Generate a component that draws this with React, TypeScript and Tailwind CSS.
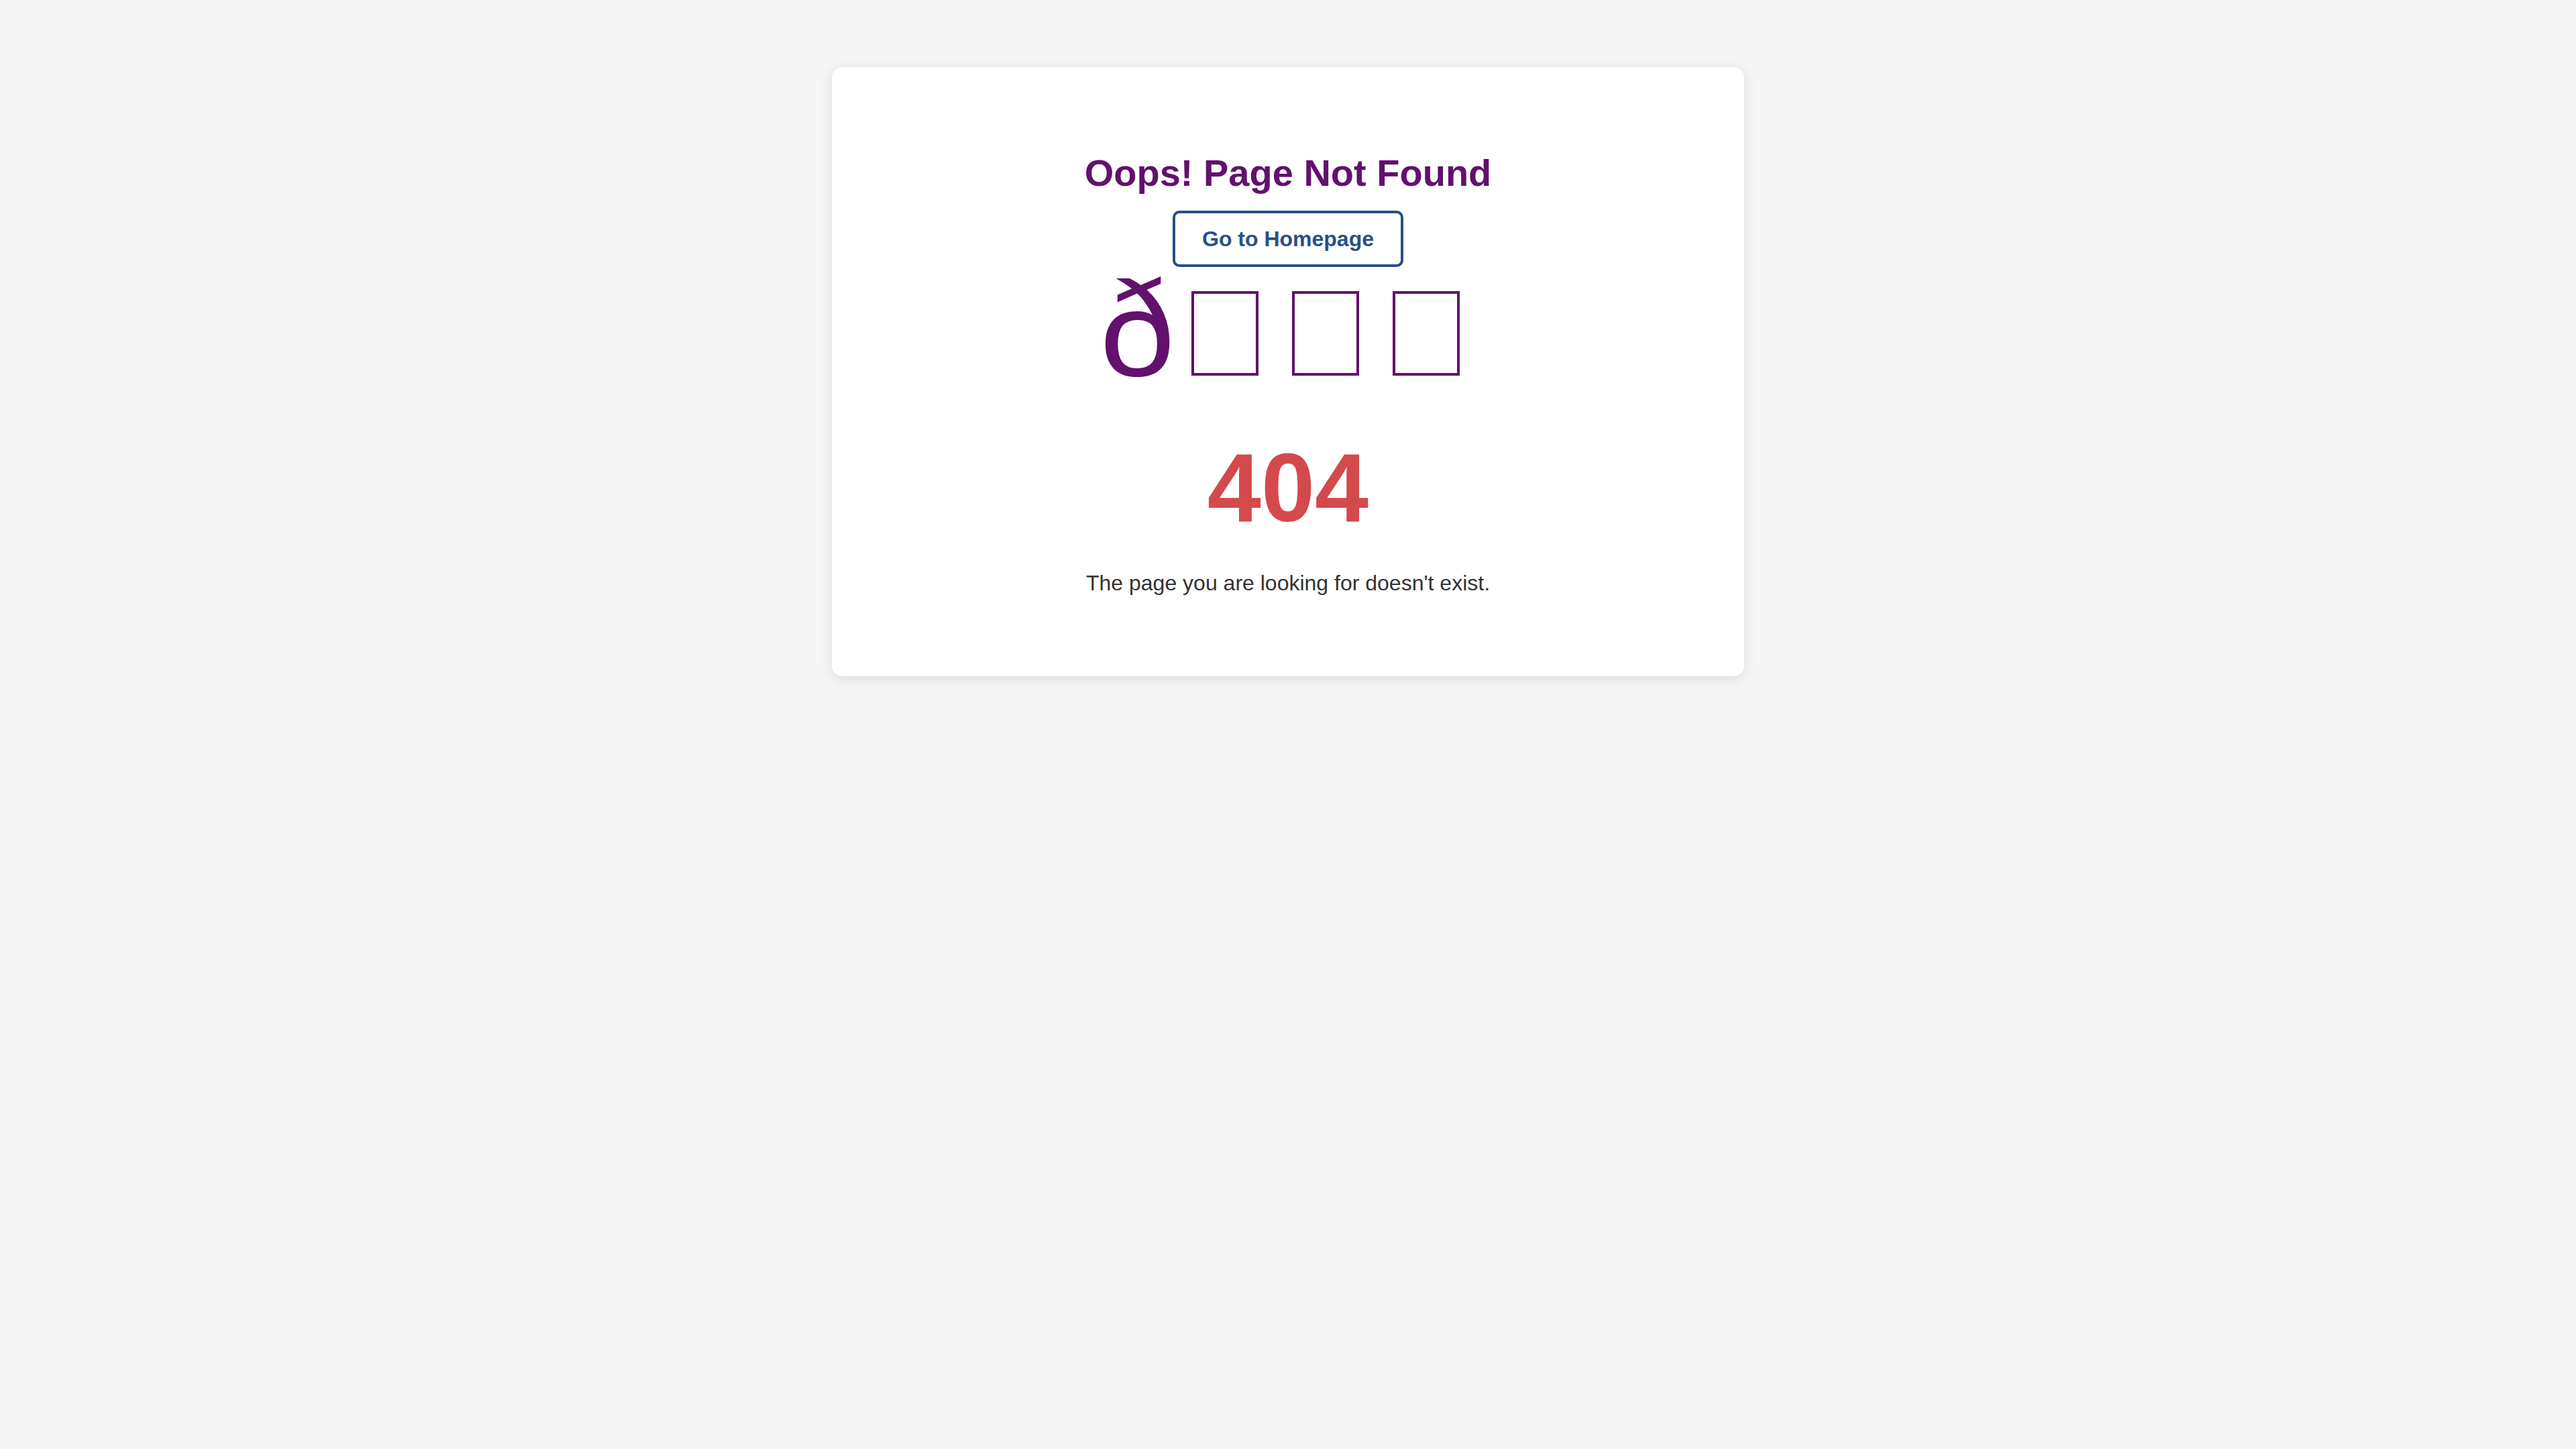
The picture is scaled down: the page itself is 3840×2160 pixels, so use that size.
function MissingGlyph() {
  return <span className="mx-[25px] inline-block h-[126px] w-[100px] border-4 border-[#62116d]" />;
}

export default function App() {
  return (
    <div className="min-h-screen bg-[#f5f5f5] px-5 py-[100px] font-['Liberation_Sans',Arial,sans-serif] text-[#333333]">
      <main className="mx-auto flex w-full max-w-[1360px] flex-col items-center rounded-[16px] bg-white px-[100px] py-[120px] text-center shadow-[0_4px_20px_rgba(0,0,0,0.1)]">
        <h1 className="text-[56px] leading-[76px] font-bold text-[#62116d]">Oops! Page Not Found</h1>
        <a href="#" className="mt-[18px] rounded-[10px] border-4 border-[#2a4f87] px-10 py-5 text-[32px] leading-[36px] font-bold text-[#2a4f87]">
          Go to Homepage
        </a>
        <div className="h-[186px] text-[200px] leading-[186px] whitespace-nowrap text-[#62116d]">
          ð<MissingGlyph /><MissingGlyph /><MissingGlyph />
        </div>
        <p className="mt-16 text-[144px] leading-[160px] font-bold text-[#d4494c]">404</p>
        <p className="mt-[42px] text-[32px] leading-[38px]">The page you are looking for doesn't exist.</p>
      </main>
    </div>
  );
}
